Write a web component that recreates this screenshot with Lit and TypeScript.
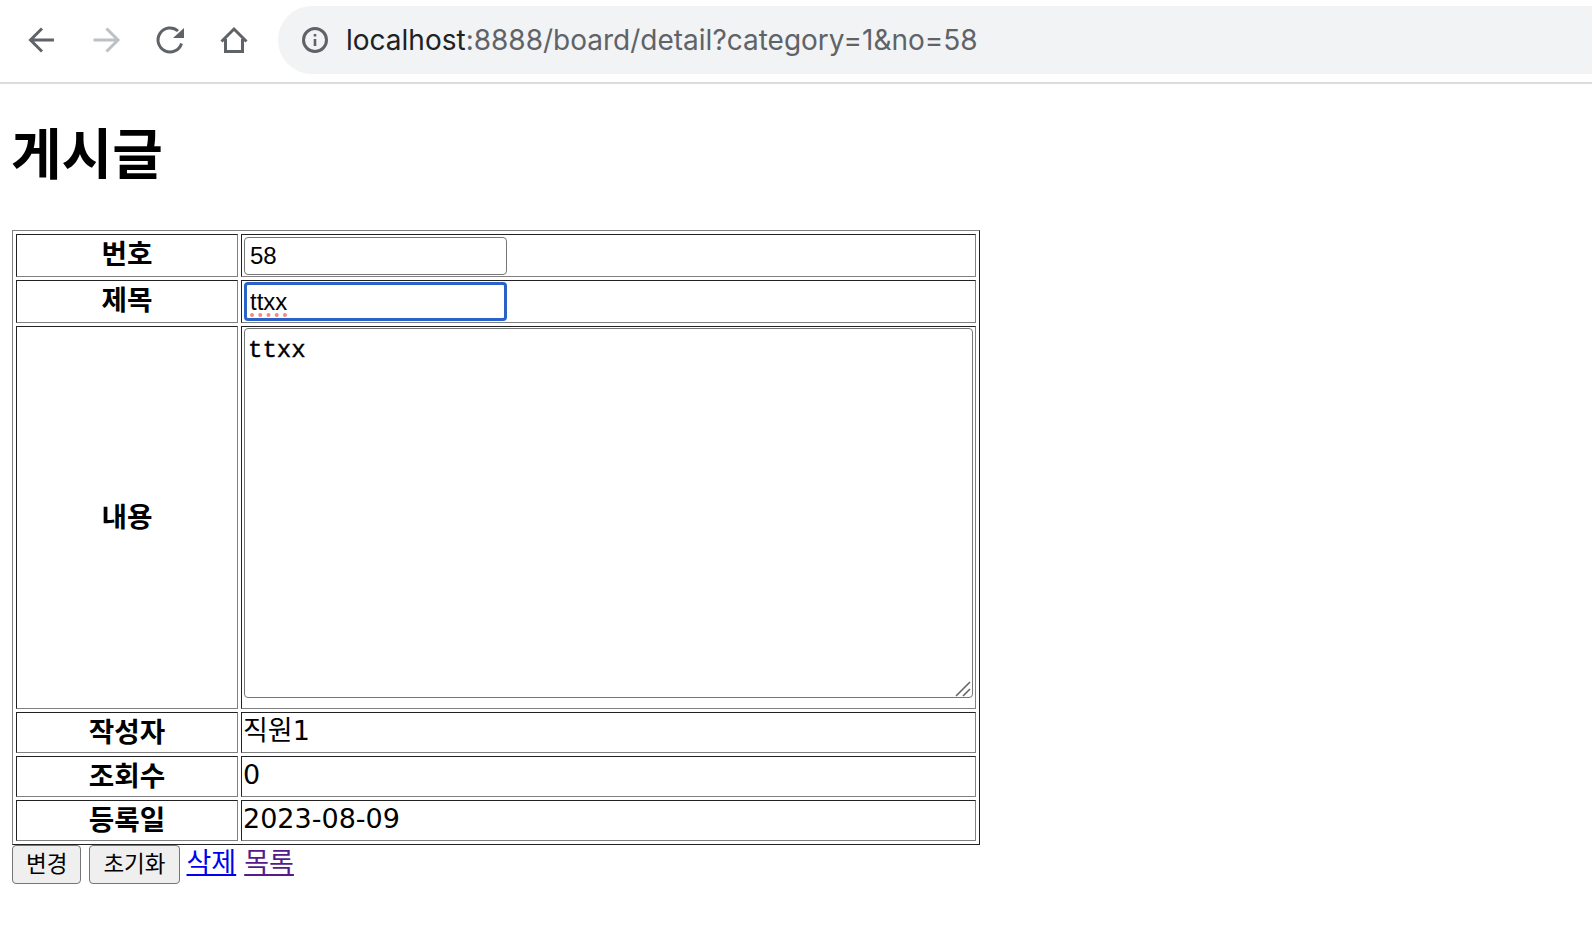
import { LitElement, html, css } from "lit";
import { customElement } from "lit/decorators.js";

@customElement("app-root")
export class AppRoot extends LitElement {
  static styles = css`
    :host {
      display: block;
      min-height: 938px;
      background: #fff;
      color: #000;
      overflow: hidden;
      font-family: "Noto Sans CJK KR", "Noto Sans", sans-serif;
    }

    /* browser toolbar */
    .toolbar {
      display: flex;
      align-items: center;
      box-sizing: border-box;
      height: 84px;
      padding: 6px 0 8px 24px;
      border-bottom: 2px solid #dadce0;
    }
    .nav {
      display: flex;
      gap: 28px;
      margin-right: 26px;
    }
    .nav svg {
      display: block;
      width: 36px;
      height: 36px;
      fill: none;
      stroke: #5f6368;
      stroke-width: 3;
    }
    .nav svg.off {
      stroke: #bdc1c6;
    }
    .omnibox {
      flex: 1;
      display: flex;
      align-items: center;
      gap: 15px;
      height: 68px;
      padding-left: 21px;
      border-radius: 34px 0 0 34px;
      background: #f1f3f4;
      font-family: Inter, "Noto Sans", sans-serif;
      font-size: 28px;
      color: #5f6368;
      white-space: nowrap;
    }
    .omnibox svg {
      width: 32px;
      height: 32px;
      fill: none;
      stroke: #5f6368;
      stroke-width: 3;
    }
    .host {
      color: #202124;
    }

    /* page */
    .page {
      padding: 0 12px;
    }
    h1 {
      margin: 30px 0 44px -1px;
      font-size: 55px;
      line-height: 72px;
      font-weight: 700;
    }
    table {
      width: 968px;
      border-collapse: separate;
      border-spacing: 3px;
      border: 1px solid;
      border-color: #808080 #222 #222 #808080;
      font-size: 27.7px;
      line-height: 35px;
    }
    th,
    td {
      padding: 0;
      border: 1px solid;
      border-color: #222 #808080 #808080 #222;
    }
    th {
      width: 220px;
      padding-bottom: 4px;
      font-weight: 700;
      text-align: center;
    }
    th.tight {
      padding-bottom: 7px;
      line-height: 30px;
    }
    td.data {
      padding: 0 0 4px 1px;
      font-family: "DejaVu Sans", "Noto Sans CJK KR", sans-serif;
      font-size: 27px;
    }
    .field {
      display: block;
      box-sizing: border-box;
      width: 263px;
      height: 38px;
      margin: 2px 0 1px 2px;
      padding: 0 5px;
      border: 1px solid #767676;
      border-radius: 4px;
      font-family: "Liberation Sans", Arial, sans-serif;
      font-size: 24px;
      line-height: 36px;
      color: #000;
      background: #fff;
    }
    .field.focus {
      height: 39px;
      margin: 1px 0 1px 2px;
      border: 3px solid #2b62c8;
      padding: 0 3px;
      line-height: 33px;
    }
    .typo {
      text-decoration: underline dotted #f28b82 4px;
      text-underline-offset: 3px;
    }
    .area {
      position: relative;
      width: 729px;
      margin: 1px 0 10px 2px;
    }
    textarea {
      display: block;
      box-sizing: border-box;
      width: 729px;
      height: 370px;
      padding: 8px 3px 3px;
      border: 1px solid #767676;
      border-radius: 4px;
      resize: none;
      font-family: "Liberation Mono", "Courier New", monospace;
      font-size: 24px;
      line-height: 27px;
      -webkit-text-stroke: 0.4px #000;
      color: #000;
      background: #fff;
    }
    .grip {
      position: absolute;
      right: 2px;
      bottom: 1px;
      width: 16px;
      height: 16px;
      fill: none;
      stroke: #666;
      stroke-width: 1.6;
    }
    .actions {
      display: flex;
      align-items: flex-start;
      height: 40px;
      font-size: 27px;
      line-height: 32px;
    }
    button {
      box-sizing: border-box;
      height: 39px;
      padding: 0 13px 5px;
      margin-right: 8px;
      border: 1px solid #767676;
      border-radius: 4px;
      background: #efefef;
      color: #000;
      font-family: "Noto Sans CJK KR", sans-serif;
      font-size: 22.5px;
    }
    button.last {
      margin-right: 7px;
    }
    a {
      margin-right: 8px;
      color: #0000ee;
    }
    a.seen {
      color: #551a8b;
    }
  `;

  render() {
    return html`
      <div class="toolbar">
        <div class="nav">
          <svg viewBox="0 0 36 36"><path d="M30 18H7M18 6.5 6.5 18 18 29.5" /></svg>
          <svg class="off" viewBox="0 0 36 36"><path d="M5.5 18h23M18.5 6.5 30 18 18.5 29.5" /></svg>
          <svg viewBox="0 0 36 36"><path d="M29.5 21.5A12 12 0 1 1 26 9" /><path d="M32 6v10H21z" fill="#5f6368" stroke="none" /></svg>
          <svg viewBox="0 0 36 36"><path d="M5.5 19.5 18 7l12.5 12.5M9.5 17v12.5h17V17" /></svg>
        </div>
        <div class="omnibox">
          <svg viewBox="0 0 32 32">
            <circle cx="16" cy="16" r="11.5" />
            <path stroke-width="2.6" d="M16 15v7M16 10v2.6" />
          </svg>
          <span><span class="host">localhost</span>:8888/board/detail?category=1&amp;no=58</span>
        </div>
      </div>
      <div class="page">
        <h1>게시글</h1>
        <table>
          <tr>
            <th class="tight">번호</th>
            <td><input class="field" .value=${"58"} /></td>
          </tr>
          <tr>
            <th class="tight">제목</th>
            <td><div class="field focus"><span class="typo">ttxx</span></div></td>
          </tr>
          <tr>
            <th>내용</th>
            <td>
              <div class="area">
                <textarea .value=${"ttxx"}></textarea>
                <svg class="grip" viewBox="0 0 16 16"><path d="M1 15 15 1M8 15l7-7" /></svg>
              </div>
            </td>
          </tr>
          <tr>
            <th>작성자</th>
            <td class="data">직원1</td>
          </tr>
          <tr>
            <th>조회수</th>
            <td class="data">0</td>
          </tr>
          <tr>
            <th>등록일</th>
            <td class="data">2023-08-09</td>
          </tr>
        </table>
        <div class="actions">
          <button>변경</button>
          <button class="last">초기화</button>
          <a href="#">삭제</a>
          <a class="seen" href="#">목록</a>
        </div>
      </div>
    `;
  }
}
